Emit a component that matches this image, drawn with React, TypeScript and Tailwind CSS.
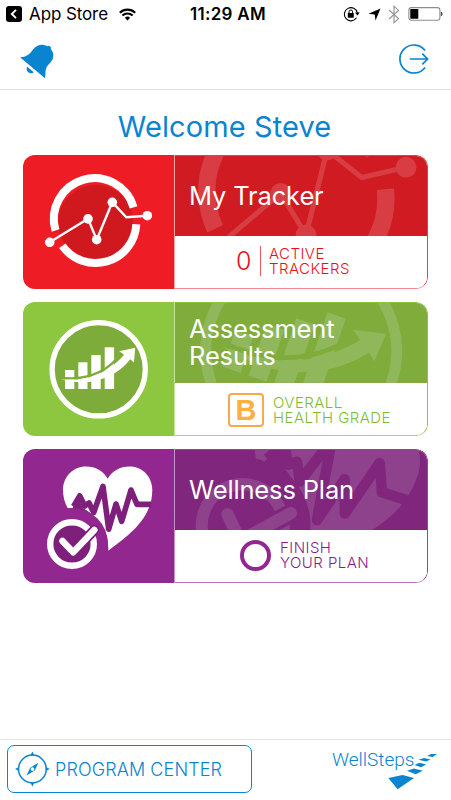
import React from 'react';

interface IconProps {
  ink?: string;
  shade?: string;
}

interface CardProps {
  title: React.ReactNode;
  frame: string;
  side: string;
  banner: string;
  nudge: string;
  icon: React.ReactNode;
  watermark: React.ReactNode;
  children: React.ReactNode;
}

// All three glyphs share the 151x134 coordinate space of the card's left panel
const TrackerGlyph: React.FC<IconProps> = ({ ink = '#fff', shade }) => (
  <g>
    {shade && <circle cx="72.7" cy="67.3" r="37.5" fill={shade} />}
    <g fill="none" stroke={ink}>
      <path d="M32.5 75.5A40.7 40.7 0 0 1 110.6 52.3" strokeWidth="8" />
      <path d="M39.3 90.7A40.7 40.7 0 0 0 113.3 69.3" strokeWidth="8" />
      <path d="M26.7 87.3L65 63.7L73.7 84.7L89.3 47.3L103.3 62.3L124.3 60.7" strokeWidth="2.4" />
    </g>
    <g fill={ink}>
      <circle cx="26.7" cy="87.3" r="4.8" />
      <circle cx="65" cy="63.9" r="4.8" />
      <circle cx="73.7" cy="84.7" r="4.8" />
      <circle cx="89.3" cy="47.3" r="4.8" />
      <circle cx="124.3" cy="60.7" r="4.8" />
    </g>
  </g>
);

const GrowthGlyph: React.FC<IconProps> = ({ ink = '#fff', shade }) => (
  <g>
    <circle cx="75.7" cy="67.3" r="46.6" fill={shade ?? 'none'} stroke={ink} strokeWidth="5.3" />
    <g fill={ink}>
      <rect x="42" y="68" width="9.3" height="19" />
      <rect x="55.3" y="60.3" width="9.2" height="26.7" />
      <rect x="68.3" y="53" width="9.4" height="34" />
      <rect x="81.7" y="45.3" width="9.4" height="41.7" />
    </g>
    <path d="M37.5 75.8C60 78.5 81 72 95 55.5" fill="none" stroke={shade ?? '#7fac3b'} strokeWidth="2.4" />
    <path d="M37.5 77.3C62 80 84 72.5 101.2 52.8L96.2 49.3L112.2 45.8L111 60.6L107.3 57.2C92 76.5 66 85.5 37.5 77.3Z" fill={ink} />
  </g>
);

const HeartGlyph: React.FC<IconProps & { back: string }> = ({ ink = '#fff', shade, back }) => (
  <g>
    <path
      d="M44.7 59.2C41.5 53.5 40 47.5 40 41C40 28 50 17.6 63 17.6C72.5 17.6 80.5 22 84.7 29.8C89 22 97 17.6 106.5 17.6C119.5 17.6 129.3 28 129.3 41C129.3 71 103 88 85.3 101.7C86.3 77 69 58 44.7 59.2Z"
      fill={ink}
    />
    <path
      d="M50.5 57.3L56.7 46.8L61.8 57L66 54L70.7 63.5L80 37.3L85.7 80.2L93 55L98.7 72.3L108 41L114 55.4L128 55.4"
      fill="none" stroke={shade ?? back} strokeWidth="5.6" strokeLinejoin="round"
    />
    <path d="M49 60L55 49L60 59L69 65L63 63Z" fill={shade ?? back} />
    <circle cx="49" cy="95" r="36" fill={back} />
    <circle cx="49" cy="95" r="21.8" fill={shade ?? 'none'} stroke={ink} strokeWidth="6.4" />
    <path d="M39.5 92L50.2 103.3L71.3 81" fill="none" stroke={shade ?? back} strokeWidth="10" strokeLinecap="round" />
    <path d="M39.5 92L50.2 103.3L71.3 81" fill="none" stroke={ink} strokeWidth="6.6" strokeLinecap="round" strokeLinejoin="round" />
  </g>
);

const Card: React.FC<CardProps> = ({ title, frame, side, banner, nudge, icon, watermark, children }) => (
  <section className="flex h-[134px] w-[405px] overflow-hidden rounded-xl">
    <div className={`w-[151px] shrink-0 ${side}`}>
      <svg viewBox="0 0 151 134" width="151" height="134">{icon}</svg>
    </div>
    <div className={`flex flex-1 flex-col overflow-hidden rounded-r-xl border ${frame}`}>
      <div className={`relative flex h-20 items-center overflow-hidden pb-0.5 ${banner}`}>
        <svg className="absolute inset-0" viewBox="0 1 252 80" width="252" height="80">{watermark}</svg>
        <h2 className="relative pl-[14px] text-[25.5px] font-normal leading-[27px] tracking-[-0.15px] text-white">{title}</h2>
      </div>
      <div className={`flex flex-1 items-center bg-white ${nudge}`}>{children}</div>
    </div>
  </section>
);

const StatusBar = () => (
  <div className="flex h-7 items-center pl-1.5 text-[17px] leading-7 text-black">
    <svg width="16" height="16" viewBox="0 0 16 16">
      <rect width="16" height="16" rx="3" />
      <path d="M10 3.8L5.8 8L10 12.2" fill="none" stroke="#fff" strokeWidth="1.9" />
    </svg>
    <span className="ml-[7px] w-[90px] whitespace-nowrap font-normal tracking-[-0.1px]">App Store</span>
    <svg width="17" height="13" viewBox="0 0 17 13" fill="none" stroke="#000" strokeWidth="2.1">
      <path d="M.8 4.8A11 11 0 0 1 16.2 4.8" />
      <path d="M3.4 7.6A7.2 7.2 0 0 1 13.6 7.6" />
      <path d="M8.5 12.5L5.9 9.8A3.8 3.8 0 0 1 11.1 9.8Z" fill="#000" stroke="none" />
    </svg>
    <span className="ml-[54px] w-[153px] whitespace-nowrap font-semibold tracking-[0.3px]">11:29 AM</span>
    <svg width="17" height="16" viewBox="0 0 17 16">
      <path d="M13.5 11.8A6.6 6.6 0 1 1 14.4 7" fill="none" stroke="#000" strokeWidth="1.1" />
      <path d="M12 6.6h4.8l-2.4 3z" />
      <rect x="4.8" y="7" width="6" height="4.7" rx=".6" />
      <path d="M6 7.5V5.8a1.8 1.8 0 0 1 3.6 0V7.5" fill="none" stroke="#000" strokeWidth="1" />
    </svg>
    <svg className="ml-2" width="13" height="13" viewBox="0 0 13 13">
      <path d="M12.5 .5L7.5 12.5L6.7 6.5L.5 5.7Z" />
    </svg>
    <svg className="ml-[7px]" width="12" height="19" viewBox="0 0 12 19" fill="none" stroke="#999" strokeWidth="1.2">
      <path d="M1 5L10.5 13.6L6 17.6V1.4L10.5 5.4L1 14" />
    </svg>
    <svg className="ml-2" width="35" height="14" viewBox="0 0 35 14">
      <rect x=".9" y=".6" width="31" height="12.6" rx="2.4" fill="none" stroke="#8c8c8c" strokeWidth="1.1" />
      <rect x="2.3" y="2" width="8" height="9.8" rx=".6" />
      <path d="M32.9 4.6Q34.5 5 34.5 6.9T32.9 9.2Z" fill="#444" />
    </svg>
  </div>
);

export default function App() {
  return (
    <div className="flex h-[800px] w-[451px] flex-col bg-white font-['Inter','Liberation_Sans',sans-serif] font-[350]">
      <header className="h-[90px] border-b border-[#e2e2e2]">
        <StatusBar />
        <div className="flex justify-between pl-5 pr-[22px] pt-[15px]">
          <svg width="34" height="36" viewBox="20 43 34 36" fill="#0b84d0">
            <path d="M20 57.3C28 57.2 30.5 52.5 33.5 49C37.5 44.2 42.8 43.7 47.2 46.2L49.2 45.7L50.9 47.2L50.9 49.3C53.8 52.2 54 57 52.2 60C50 63.6 46.9 65.5 45.9 69C45.2 71.6 45.6 75 45 78.2Z" />
            <path d="M27 66.4L33.8 72.2C30.8 75 25.2 72 27 66.4Z" />
          </svg>
          <svg width="31" height="32" viewBox="398 43 31 32" fill="none" stroke="#0b84d0" strokeWidth="1.7">
            <path d="M425.1 50.6A14 14 0 1 0 425.1 67.4" />
            <path d="M409.7 59H427.5M422.3 53.7L427.6 59L422.3 64.3" />
          </svg>
        </div>
      </header>

      <main className="flex-1 pl-[23px]">
        <h1 className="mt-[19px] h-[46px] w-[403px] text-center text-[29px] font-normal leading-9 tracking-[0.1px] text-[#0b84d0]">Welcome Steve</h1>

        <div className="flex flex-col gap-[13px]">
          <Card
            title="My Tracker"
            frame="border-[#ee3b42] border-b-[#f4888c] border-l-[#f7a4a7]"
            side="bg-[#ee1c25]"
            banner="bg-[#cf1b21]"
            nudge="pb-0.5"
            icon={<TrackerGlyph shade="#d0191f" />}
            watermark={
              <g transform="translate(123.2 43.2) rotate(-8.7) scale(2.157) translate(-72.7 -67.3)">
                <TrackerGlyph ink="#d83d43" />
              </g>
            }
          >
            <span className="ml-[61px] w-4 text-[25px] leading-none text-[#ea1018]">0</span>
            <span className="ml-2 h-[30px] w-px bg-[#ee5a60]" />
            <p className="ml-2 text-[15px] leading-[15.5px] tracking-[0.45px] text-[#ea1018]">ACTIVE<br />TRACKERS</p>
          </Card>

          <Card
            title={<>Assessment<br />Results</>}
            frame="border-[#8cc63f] border-b-[#a9d56d] border-l-[#c6e39f]"
            side="bg-[#8dc63f]"
            banner="bg-[#7fac3b]"
            nudge="pt-0.5"
            icon={<GrowthGlyph shade="#7dac3a" />}
            watermark={
              <g transform="translate(126.2 49) rotate(19) scale(2.05) translate(-75.7 -67.3)">
                <GrowthGlyph ink="#90b85a" />
              </g>
            }
          >
            <span className="ml-[53px] flex h-[34px] w-9 items-center justify-center rounded-[4px] border-2 border-[#f9a94a] font-['Liberation_Sans',sans-serif] text-[29px] font-bold leading-none text-[#fbb040]">B</span>
            <p className="ml-[9px] text-[15px] leading-[15.5px] tracking-[0.45px] text-[#7dbd2c]">OVERALL<br />HEALTH GRADE</p>
          </Card>

          <Card
            title="Wellness Plan"
            frame="border-[#9a4198] border-b-[#b873b6] border-l-[#c793c5]"
            side="bg-[#92278f]"
            banner="bg-[#80267d]"
            nudge="pb-0.5"
            icon={<HeartGlyph shade="#7d1f7b" back="#92278f" />}
            watermark={
              <g transform="translate(141.7 72) rotate(18) scale(1.88) translate(-85.7 -80.7)">
                <HeartGlyph ink="#8f428c" back="#80267d" />
              </g>
            }
          >
            <span className="ml-[65px] h-[31px] w-[31px] rounded-full border-4 border-[#92278f]" />
            <p className="ml-[9px] text-[15px] leading-[15.5px] tracking-[0.45px] text-[#8a1a88]">FINISH<br />YOUR PLAN</p>
          </Card>
        </div>
      </main>

      <footer className="flex h-[61px] border-t border-[#e6e6e6] pl-[7px] pt-[5px]">
        <button className="flex h-12 w-[245px] items-center rounded-[7px] border border-[#0b84d0] pl-[7px] text-[18px] text-[#0b84d0]">
          <svg width="35" height="36" viewBox="0 0 35 36" fill="#0b84d0">
            <circle cx="17.4" cy="18" r="13.9" fill="none" stroke="#0b84d0" strokeWidth="1.5" />
            <path d="M17.4 .5l2 4h-4zM17.4 35.5l2-4h-4zM0 18l4-2v4zM34.8 18l-4-2v4z" />
            <path fillRule="evenodd" d="M23.3 11.8L19.8 19.5L11.5 24.4L15.2 16.7ZM17.5 16.3a1.8 1.8 0 1 0 .01 0Z" />
          </svg>
          <span className="ml-[5px] whitespace-nowrap tracking-[0.1px]">PROGRAM CENTER</span>
        </button>
        <div className="relative ml-20 w-[108px] text-[#0b84d0]">
          <span className="block pt-[2px] font-['Roboto','Liberation_Sans',sans-serif] text-[19px] font-light leading-[26px]">WellSteps</span>
          <svg className="absolute left-0 top-0" width="108" height="50" viewBox="332 745 108 50" fill="#0b84d0">
            <path d="M388.3 778L402.5 775L414 778L397.6 789.3Z" />
            <path d="M407 770.8L413.8 768.4L422.8 770.8L415.6 774.2Z" />
            <path d="M414.5 764.9L419.5 762.8L426.2 764.6L421 767.2Z" />
            <path d="M418.5 759.7L424 758L430.7 759.5L426 761.6Z" />
            <path d="M427.2 756L431 754.1L437 753.9L432.6 757Z" />
          </svg>
        </div>
      </footer>
    </div>
  );
}
